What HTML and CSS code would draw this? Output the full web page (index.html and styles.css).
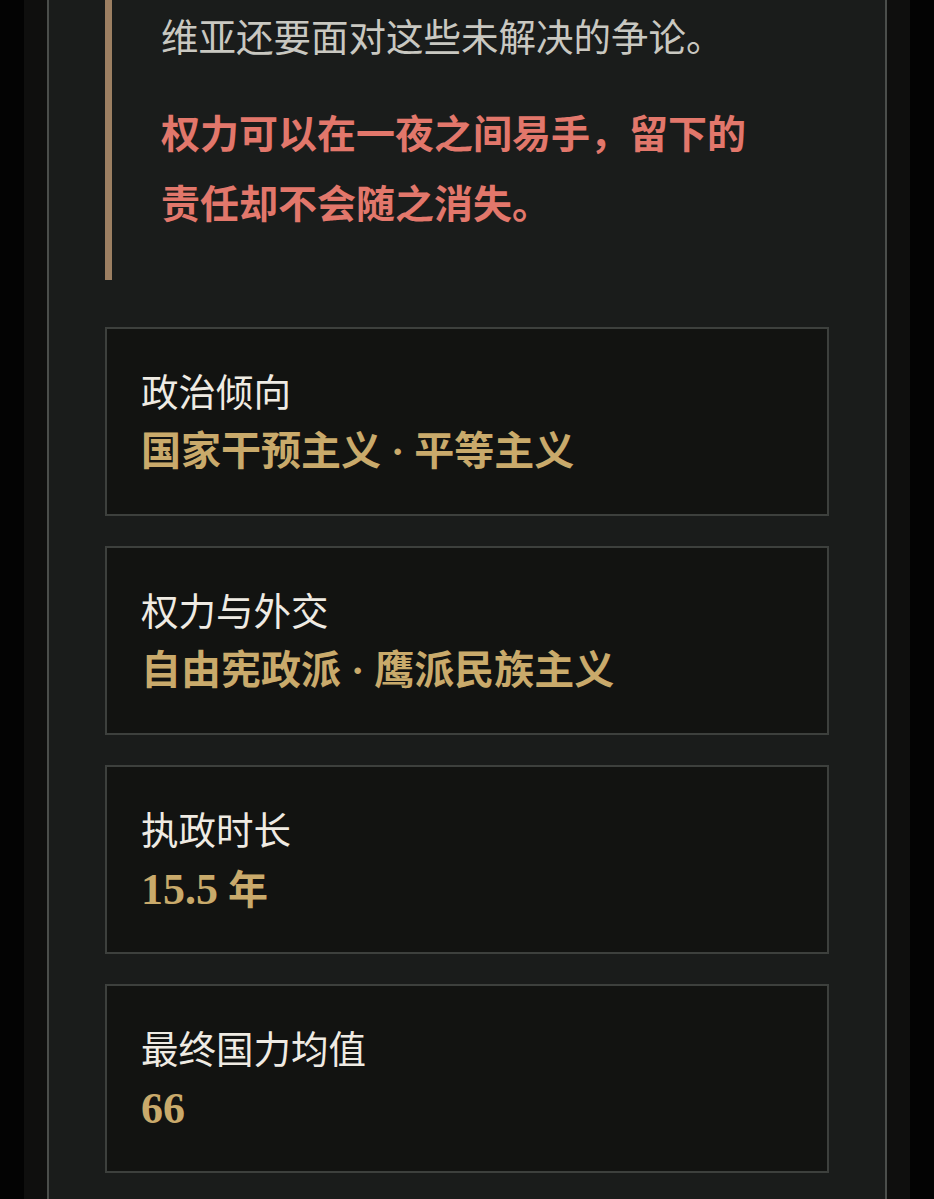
FILE: index.html
```html
<!DOCTYPE html>
<html lang="zh-CN">
<head>
  <meta charset="UTF-8" />
  <meta name="viewport" content="width=device-width, initial-scale=1.0"/>
  <title>执政总结</title>
  <link rel="stylesheet" href="styles.css">
</head>
<body>

  <div class="page">
    <div class="panel">

      <blockquote class="epilogue">
        <p class="epilogue-text">维亚还要面对这些未解决的争论。</p>
        <p class="epilogue-moral">权力可以在一夜之间易手，留下的<br>责任却不会随之消失。</p>
      </blockquote>

      <section class="stats">
        <div class="stat-card">
          <div class="stat-label">政治倾向</div>
          <div class="stat-value">国家干预主义 · 平等主义</div>
        </div>
        <div class="stat-card">
          <div class="stat-label">权力与外交</div>
          <div class="stat-value">自由宪政派 · 鹰派民族主义</div>
        </div>
        <div class="stat-card">
          <div class="stat-label">执政时长</div>
          <div class="stat-value"><span class="num">15.5</span> 年</div>
        </div>
        <div class="stat-card">
          <div class="stat-label">最终国力均值</div>
          <div class="stat-value"><span class="num">66</span></div>
        </div>
      </section>

    </div>
  </div>

</body>
</html>
```

FILE: styles.css
```css
html, body {
  margin: 0;
  padding: 0;
}

body {
  background: #030303;
  font-family: 'Noto Sans CJK SC', 'Noto Sans', sans-serif;
  color: #ece8e0;
  height: 1199px;
  overflow: hidden;
}

.page {
  margin: 0 24px;
  padding: 0 23px;
  background: #0f0f0e;
  min-height: 100%;
}

.panel {
  background: #1a1c1b;
  border-left: 2px solid #4b4e4b;
  border-right: 2px solid #4b4e4b;
  padding: 0 56px 40px;
  min-height: 1199px;
  box-sizing: border-box;
}

.epilogue {
  margin: 0;
  padding: 0 0 44px 49px;
  border-left: 7px solid #9c7f62;
}

.epilogue p {
  margin: 0;
  font-size: 37.5px;
  line-height: 70px;
}

.epilogue-text {
  color: #c9c8c1;
}

.epilogue .epilogue-moral {
  margin-top: 26px;
  color: #e2776b;
  font-weight: bold;
  font-size: 39px;
}

.stats {
  display: flex;
  flex-direction: column;
  gap: 30px;
  margin-top: 47px;
}

.stat-card {
  background: #121311;
  border: 2px solid #3d403d;
  padding: 34px 34px 32px;
}

.stat-label {
  font-size: 37.5px;
  line-height: 54px;
  color: #efebe3;
}

.stat-value {
  font-family: 'Liberation Serif', 'Noto Sans CJK SC', serif;
  font-weight: bold;
  font-size: 40px;
  line-height: 60px;
  height: 60px;
  color: #c9aa6b;
  margin-top: 5px;
}

.num {
  font-size: 44px;
}
```
